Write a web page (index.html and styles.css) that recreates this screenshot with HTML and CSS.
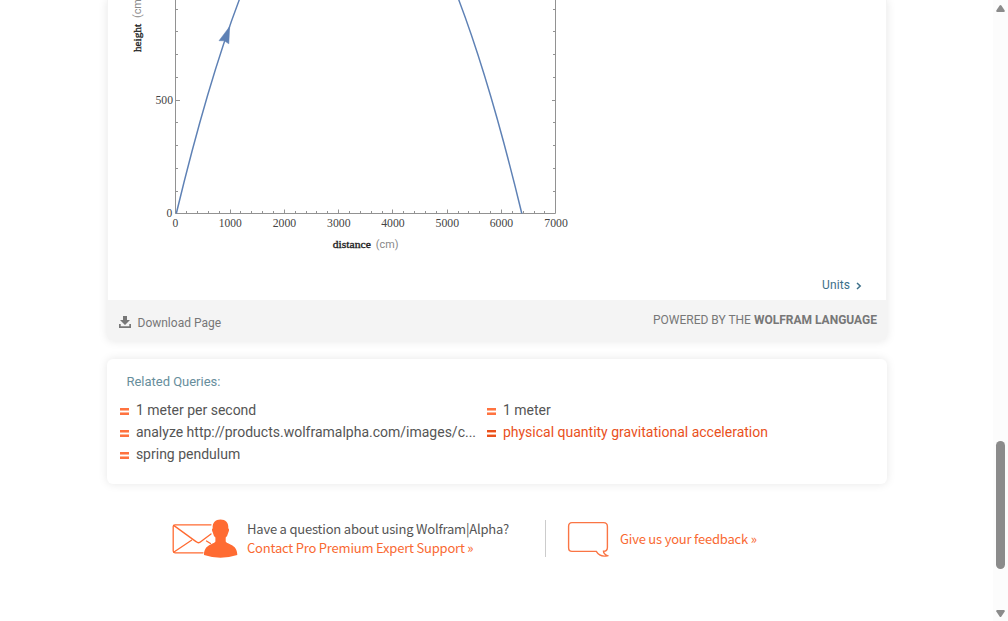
FILE: index.html
```html
<!DOCTYPE html>
<html lang="en">
<head>
<meta charset="utf-8">
<title>Wolfram|Alpha</title>
<link rel="stylesheet" href="styles.css">
</head>
<body>
<div class="window">
  <main class="page">
    <section class="card results">
      <div class="plot-area">
        <svg class="plot" width="480" height="260" viewBox="107 0 480 260">
          <g class="axis">
            <path d="M175.5 0V213.5H555.5V0"/>
            <path d="M175.5 9.5h2.5M175.5 31.5h2.5M175.5 54.5h2.5M175.5 77.5h2.5M175.5 100.5h4.5M175.5 122.5h2.5M175.5 145.5h2.5M175.5 168.5h2.5M175.5 191.5h2.5M175.5 213.5h4"/>
            <path d="M555.5 9.5h-2.5M555.5 31.5h-2.5M555.5 54.5h-2.5M555.5 77.5h-2.5M555.5 100.5h-3.5M555.5 122.5h-2.5M555.5 145.5h-2.5M555.5 168.5h-2.5M555.5 191.5h-2.5"/>
            <path d="M186.5 213v-2M197.5 213v-2M208.5 213v-2M219.5 213v-2M230.5 213v-3.5M240.5 213v-2M251.5 213v-2M262.5 213v-2M273.5 213v-2M284.5 213v-3.5M295.5 213v-2M306.5 213v-2M316.5 213v-2M327.5 213v-2M338.5 213v-3.5M349.5 213v-2M360.5 213v-2M371.5 213v-2M382.5 213v-2M392.5 213v-3.5M403.5 213v-2M414.5 213v-2M425.5 213v-2M436.5 213v-2M447.5 213v-3.5M458.5 213v-2M468.5 213v-2M479.5 213v-2M490.5 213v-2M501.5 213v-3.5M512.5 213v-2M523.5 213v-2M534.5 213v-2M544.5 213v-2M555.5 213v-3.5"/>
          </g>
          <path class="curve" d="M176.3 213.5Q348.9 -503 521.8 213.5"/>
          <path class="arrow" d="M229.7 26.5 219 40.7 224.3 40.8 228.8 43.8Z"/>
          <g class="ticks">
            <text x="155.500" y="104" textLength="17.5" lengthAdjust="spacingAndGlyphs">500</text>
            <text x="166.5" y="217">0</text>
            <text x="172.6" y="227">0</text>
            <text x="218.7" y="227" textLength="23" lengthAdjust="spacingAndGlyphs">1000</text>
            <text x="272.7" y="227" textLength="23.5" lengthAdjust="spacingAndGlyphs">2000</text>
            <text x="327" y="227" textLength="23.5" lengthAdjust="spacingAndGlyphs">3000</text>
            <text x="381.2" y="227" textLength="23.5" lengthAdjust="spacingAndGlyphs">4000</text>
            <text x="435.5" y="227" textLength="23.5" lengthAdjust="spacingAndGlyphs">5000</text>
            <text x="489.7" y="227" textLength="23.5" lengthAdjust="spacingAndGlyphs">6000</text>
            <text x="544.3" y="227" textLength="23.5" lengthAdjust="spacingAndGlyphs">7000</text>
          </g>
          <text class="name" x="332.8" y="248" textLength="38" lengthAdjust="spacingAndGlyphs">distance</text>
          <text class="unit" x="375.8" y="248" textLength="22.6" lengthAdjust="spacingAndGlyphs">(cm)</text>
          <g transform="translate(141 52) rotate(-90)">
            <text class="name" x="0" y="0" textLength="28" lengthAdjust="spacingAndGlyphs">height</text>
            <text class="unit" x="34" y="0" textLength="22.6" lengthAdjust="spacingAndGlyphs">(cm)</text>
          </g>
        </svg>
      </div>
      <div class="units"><span>Units</span><svg width="6" height="8" viewBox="0 0 6 8"><path d="M1 1l3.2 3L1 7"/></svg></div>
      <footer class="card-footer">
        <a class="download"><svg width="12" height="12" viewBox="0 0 12 12"><path d="M4 0h4v4h3L6 9 1 4h3zM0 8h1.7v2.3h8.6V8H12v4H0z"/></svg><span>Download Page</span></a>
        <span class="powered">POWERED BY THE <b>WOLFRAM LANGUAGE</b></span>
      </footer>
    </section>
    <section class="card related">
      <h2>Related Queries:</h2>
      <ul class="queries">
        <li><i class="eq"></i><span>1 meter per second</span></li>
        <li><i class="eq"></i><span>1 meter</span></li>
        <li><i class="eq"></i><span>analyze http://products.wolframalpha.com/images/c...</span></li>
        <li class="active"><i class="eq"></i><span>physical quantity gravitational acceleration</span></li>
        <li><i class="eq"></i><span>spring pendulum</span></li>
      </ul>
    </section>
    <section class="help">
      <svg class="contact-icon" width="66" height="40" viewBox="172 518 66 40">
        <g fill="none" stroke="#ff6b32" stroke-width="1.3" stroke-linecap="round">
          <path d="M211 524.8H175Q173.2 524.8 173.2 526.6V551Q173.2 552.8 175 552.8H203"/>
          <path d="M174 525.6 196 541.6Q198.500 543.8 201 541.6L211 534M174 552 191.500 540.300M206.500 541 210.500 543.5"/>
        </g>
        <path fill="#ff6b32" d="M220.500 519.500C225.500 519.500 228.800 522.500 228.300 528.200Q229.800 529.200 228.300 532.500Q227.500 536 225.700 537.500V541.500C227 544.500 237.500 544 237.300 555Q229 557.700 220.500 557.700T204 555C204 544 214 544.500 215.400 541.500V537.500Q213.500 536 212.800 532.500Q211.200 529.200 212.700 528.200C212.200 522.500 215.500 519.500 220.500 519.500Z"/>
      </svg>
      <div class="contact"><span class="question">Have a question about using Wolfram|Alpha?</span><a class="support">Contact Pro Premium Expert Support »</a></div>
      <div class="divider"></div>
      <svg class="bubble" width="42" height="37" viewBox="567 521 42 37"><path d="M572 522.600H603.500Q607.400 522.600 607.400 526.500V547.500Q607.400 551.300 603.500 551.300Q603.500 554 607.300 555.700Q600 557.500 596.300 551.400H572Q568.600 551.400 568.600 547.500V526.500Q568.600 522.600 572 522.600Z"/></svg>
      <a class="feedback">Give us your feedback »</a>
    </section>
  </main>
  <aside class="scrollbar">
    <svg width="9" height="7" viewBox="0 0 9 7"><path d="M3.600.6Q4.500-.4 5.400.6L8.700 5.500Q9 7 8 7H1Q0 7 .3 5.500Z"/></svg>
    <div class="thumb"></div>
    <svg width="9" height="7" viewBox="0 0 9 7"><path d="M3.600 6.400Q4.500 7.400 5.400 6.400L8.700 1.500Q9 0 8 0H1Q0 0 .3 1.500Z"/></svg>
  </aside>
</div>
</body>
</html>
```
FILE: styles.css
```css
* { box-sizing: border-box; }
body { margin: 0; background: #fff; font-family: Roboto, sans-serif; overflow: hidden; }
.window { display: flex; height: 621px; }
.page { flex: 1; padding-left: 107px; }
.card { width: 780px; background: #fff; border-radius: 6px; box-shadow: 0 0 10px rgba(0,0,0,.1); }
.results { height: 341px; border-radius: 0 0 6px 6px; overflow: visible; display: flex; flex-direction: column; border: solid #f4f4f4; border-width: 0 1px; }
.plot-area { height: 260px; }
.plot { display: block; margin-left: -1px; }
.axis { fill: none; stroke: #929292; stroke-width: 1; }
.curve { fill: none; stroke: #5e81b5; stroke-width: 1.5; }
.arrow { fill: #5e81b5; stroke: #5e81b5; stroke-width: .5; }
.ticks { font: 11.5px "Liberation Serif", serif; fill: #444; }
.name { font: 11px "Liberation Serif", serif; fill: #222; stroke: #222; stroke-width: .35; }
.unit { font: 11px Roboto, sans-serif; fill: #888; }
.units { height: 40px; padding: 17px 24px 0 0; display: flex; justify-content: flex-end; gap: 6px; font-size: 12px; line-height: 16px; letter-spacing: .1px; color: #3d7089; }
.units svg { margin-top: 5px; fill: none; stroke: #3d7089; stroke-width: 1.5; }
.card-footer { height: 41px; margin: 0 -1px; padding: 0 10px 0 12px; border-radius: 0 0 6px 6px; background: #f4f4f4; display: flex; justify-content: space-between; color: #777; font-size: 12px; }
.download { display: flex; gap: 6.500px; padding-top: 15px; line-height: 16px; }
.download svg { margin-top: 1px; fill: #777; }
.powered { padding-top: 12px; line-height: 16px; }
.related { height: 125px; margin-top: 18px; padding: 14px 0 0 12px; }
h2 { margin: 0 0 9px 7.500px; font-size: 13px; line-height: 17px; font-weight: 400; letter-spacing: -.02px; color: #678e9c; }
.queries { margin: 0; padding: 0; list-style: none; display: grid; grid-template-columns: 367.500px 380px; grid-auto-rows: 22px; font-size: 14px; line-height: 22px; color: #555; }
.queries li { display: flex; align-items: center; gap: 7px; white-space: nowrap; }
.eq { width: 9px; height: 7px; margin: 3px 0 0 .9px; border: solid #ff7340; border-width: 2px 0; background: linear-gradient(#ffb496 1px, #fff 1px, #fff 2px, #ffb496 2px) padding-box; }
.active { color: #e9511c; }
.active .eq { border-color: #e9511c; }
.queries li:nth-child(even) .eq { margin-left: .4px; }
.help { display: flex; height: 40px; margin: 34px 0 0 65px; font: 13px/19px "Noto Sans CJK SC", sans-serif; letter-spacing: -.2px; white-space: nowrap; color: #555; }
.contact { width: 262px; margin: 1px 0 0 9px; display: flex; flex-direction: column; }
.support, .feedback { color: #f96932; }
.divider { width: 1px; height: 37px; margin: 2px 21px 0 36px; background: #ccc; }
.bubble { margin-top: 3px; fill: none; stroke: #fa7544; stroke-width: 1.4; }
.feedback { margin: 11px 0 0 11px; }
.scrollbar { width: 15px; padding: 5px 0 4px 3px; background: #fcfcfc; display: flex; flex-direction: column; }
.scrollbar svg { fill: #8b8b8b; }
.thumb { width: 9px; height: 128px; margin: 429px 0 41px; border-radius: 5px; background: #8b8b8b; }
```
